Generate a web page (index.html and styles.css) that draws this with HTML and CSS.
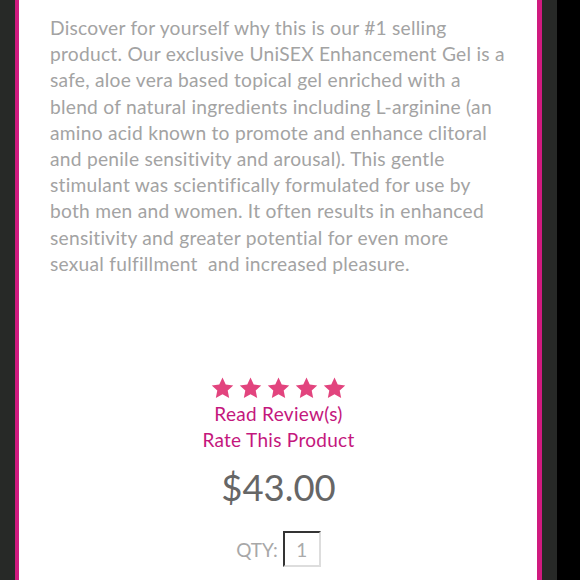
FILE: index.html
```html
<!DOCTYPE html>
<html lang="en">
<head>
  <meta charset="UTF-8" />
  <meta name="viewport" content="width=device-width, initial-scale=1.0"/>
  <title>UniSEX Enhancement Gel</title>
  <link rel="stylesheet" href="styles.css">
</head>
<body>
  <div class="frame">
    <div class="product card">
      <p class="description">
        Discover for yourself why this is our #1 selling<br>
        product. Our exclusive UniSEX Enhancement Gel is a<br>
        safe, aloe vera based topical gel enriched with a<br>
        blend of natural ingredients including L-arginine (an<br>
        amino acid known to promote and enhance clitoral<br>
        and penile sensitivity and arousal). This gentle<br>
        stimulant was scientifically formulated for use by<br>
        both men and women. It often results in enhanced<br>
        sensitivity and greater potential for even more<br>
        sexual fulfillment &nbsp;and increased pleasure.
      </p>

      <div class="rating">
        <div class="stars">
          <svg viewBox="0 0 24 24"><path d="M12 1.5l3.1 6.6 7.2.9-5.3 5 1.4 7.1L12 17.6l-6.4 3.5 1.4-7.1-5.3-5 7.2-.9z"/></svg>
          <svg viewBox="0 0 24 24"><path d="M12 1.5l3.1 6.6 7.2.9-5.3 5 1.4 7.1L12 17.6l-6.4 3.5 1.4-7.1-5.3-5 7.2-.9z"/></svg>
          <svg viewBox="0 0 24 24"><path d="M12 1.5l3.1 6.6 7.2.9-5.3 5 1.4 7.1L12 17.6l-6.4 3.5 1.4-7.1-5.3-5 7.2-.9z"/></svg>
          <svg viewBox="0 0 24 24"><path d="M12 1.5l3.1 6.6 7.2.9-5.3 5 1.4 7.1L12 17.6l-6.4 3.5 1.4-7.1-5.3-5 7.2-.9z"/></svg>
          <svg viewBox="0 0 24 24"><path d="M12 1.5l3.1 6.6 7.2.9-5.3 5 1.4 7.1L12 17.6l-6.4 3.5 1.4-7.1-5.3-5 7.2-.9z"/></svg>
        </div>
        <a href="#" class="review-link">Read Review(s)</a>
        <a href="#" class="review-link">Rate This Product</a>
      </div>

      <div class="price">$43.00</div>

      <div class="qty">
        <label for="qty">QTY:</label>
        <input id="qty" type="text" value="1">
      </div>
    </div>
  </div>
</body>
</html>
```

FILE: styles.css
```css
html, body {
  margin: 0;
  height: 100%;
  overflow: hidden;
}

body {
  background-color: #000;
  font-family: Lato, 'Liberation Sans', sans-serif;
}

.frame {
  width: 527px;
  height: 100%;
  padding: 0 15px;
  background-color: #272927;
}

.card {
  height: 100%;
  background-color: #fff;
  border-left: 4px solid #d01a7f;
  border-right: 5px solid #d01a7f;
  box-sizing: border-box;
  padding: 15px 30px 0 31px;
}

.description {
  margin: 0;
  font-size: 19.2px;
  line-height: 26.2px;
  letter-spacing: 0.25px;
  color: #a3a3a3;
  white-space: nowrap;
}

.rating {
  margin-top: 99px;
  display: flex;
  flex-direction: column;
  align-items: center;
}

.stars {
  display: flex;
  gap: 3px;
  margin-left: -1px;
}

.stars svg {
  width: 25px;
  height: 25px;
  fill: #e2447e;
}

.review-link {
  color: #c4177d;
  text-decoration: none;
  font-size: 19px;
  line-height: 26px;
  letter-spacing: 0.3px;
}

.price {
  text-align: center;
  margin-top: 13px;
  font-size: 36.5px;
  line-height: 42px;
  color: #666;
}

.qty {
  display: flex;
  justify-content: center;
  align-items: center;
  gap: 5px;
  margin-top: 23px;
  color: #a8a8a8;
  font-size: 19px;
}

.qty input {
  width: 30px;
  height: 32px;
  padding: 0 2px;
  border: 2px inset #ddd;
  border-top-color: #888;
  border-left-color: #888;
  font-family: inherit;
  font-size: 19px;
  color: #aaa;
  text-align: center;
}
```
